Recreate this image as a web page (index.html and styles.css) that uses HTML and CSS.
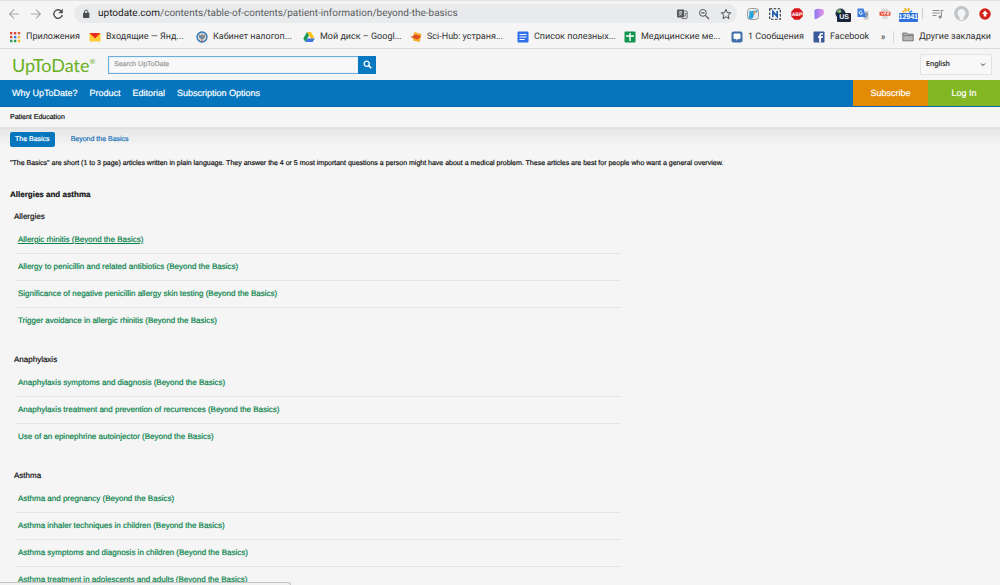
FILE: index.html
```html
<!DOCTYPE html>
<html lang="en">
<head>
<meta charset="utf-8">
<title>Patient Education - UpToDate</title>
<link rel="stylesheet" href="styles.css">
</head>
<body>
<div class="chrome">
  <div class="toolbar">
    <button class="tool" aria-label="Back"><svg width="12" height="12" viewBox="0 0 12 12" fill="none" stroke="#aaa" stroke-width="1.2"><path d="M11 6H1.8M6 1.6 1.6 6 6 10.4"/></svg></button>
    <button class="tool" aria-label="Forward"><svg width="12" height="12" viewBox="0 0 12 12" fill="none" stroke="#aaa" stroke-width="1.2"><path d="M1 6h9.2M6 1.6 10.4 6 6 10.4"/></svg></button>
    <button class="tool" aria-label="Reload"><svg width="12" height="12" viewBox="0 0 12 12"><path d="M9.7 3.6A4.3 4.3 0 1 0 10.3 7" fill="none" stroke="#4c4d50" stroke-width="1.4"/><path d="M10.8.8v4.4H6.4z" fill="#4c4d50"/></svg></button>
    <div class="omnibox">
      <svg width="8" height="10" viewBox="0 0 8 10"><rect x="1" y="3.8" width="6.4" height="5.2" rx=".7" fill="#4c4d50"/><path d="M2.5 4V2.8a1.7 1.7 0 0 1 3.4 0V4" fill="none" stroke="#4c4d50"/></svg>
      <span class="url"><b>uptodate.com</b>/contents/table-of-contents/patient-information/beyond-the-basics</span>
      <button class="tool" aria-label="Translate"><svg width="12" height="12" viewBox="0 0 12 12"><rect x="1" y="1.5" width="7" height="8" rx=".8" fill="#55565a"/><path d="M2.6 4h3.6M4.4 3v1M5.7 4C5.2 6 4 7 2.6 7.5M3.3 5c.5 1 1.3 1.7 2.4 2.3" stroke="#eee" stroke-width=".8" fill="none"/><path d="M8 3h2.4c.5 0 .8.3.8.8v6c0 .5-.3.8-.8.8H6l-.7-1.1" fill="none" stroke="#55565a" stroke-width=".8"/><path d="M8.6 5.5h2M9.6 5.5C9.5 7 9 8 8 8.8M8.6 7l1.8 1.8" stroke="#55565a" stroke-width=".7" fill="none"/></svg></button>
      <button class="tool" aria-label="Zoom"><svg width="12" height="12" viewBox="0 0 12 12" fill="none" stroke="#55565a"><circle cx="4.9" cy="4.9" r="3.4"/><path d="M3.3 4.9h3.2M7.4 7.4l3.6 3.6" stroke-width="1.2"/></svg></button>
      <button class="tool" aria-label="Bookmark this page"><svg width="12" height="12" viewBox="0 0 12 12" fill="none" stroke="#4c4d50"><path d="M6 1.4 7.3 4.6l3.5.3-2.7 2.3.9 3.4-3-1.8-3 1.8.9-3.4L1.2 4.9l3.5-.3z"/></svg></button>
    </div>
    <div class="extensions">
      <svg width="12" height="12" viewBox="0 0 12 12"><rect x=".5" y=".5" width="11" height="11" rx="3" fill="#e9edf0" stroke="#777" stroke-width=".7"/><path d="M1.500 10.500C2.500 6 3 4 1.500 3.500L11 2.200 9.800 4.500 7.500 5 6.200 9.500c-1 1.500-3.500 1.800-4.700 1z" fill="#27a4d8"/><path d="m6.500 3.200 3-.5-1 2-1.800 3z" fill="#ef9b65"/></svg>
      <svg width="12" height="12" viewBox="0 0 12 12"><rect x=".7" y=".7" width="10.6" height="10.6" fill="none" stroke="#25313b" stroke-width="1.100" stroke-dasharray="2.5 1.500"/><path d="M3.9 9V3.400L8.200 8.600V3" fill="none" stroke="#1757ad" stroke-width="1.600"/></svg>
      <svg width="12" height="12" viewBox="0 0 12 12"><path d="M3.6.3h4.8l3.3 3.3v4.8l-3.3 3.3H3.6L.3 8.4V3.6z" fill="#d9151c"/><text x="6" y="7.8" class="abp">ABP</text></svg>
      <svg width="12" height="12" viewBox="0 0 12 12"><defs><linearGradient id="pp" x1="0" x2="1"><stop stop-color="#8d75ee"/><stop offset="1" stop-color="#e996e9"/></linearGradient></defs><path d="M1.500 2 4 .8 9 1c2.500 1 2.800 4 1 6L6 9.500 2.500 11.500 1.500 10z" fill="url(#pp)"/></svg>
      <span class="badged"><svg width="12" height="12" viewBox="0 0 12 12"><circle cx="5.500" cy="5.500" r="5" fill="#243549"/><path d="M1.500 3.500c1.500-2 3-2.500 4-2l1 2-2 2z" fill="#82b575"/></svg><span class="badge dark">US</span></span>
      <svg width="12" height="12" viewBox="0 0 12 12"><path d="M5 3h6.500v8.500H7z" fill="#c5c8cc"/><path d="M.5.5h6L9 9H.5z" fill="#397de1"/><path d="M5.200 3.500a1.700 1.700 0 1 0 .3 1.700H4" fill="none" stroke="#fff" stroke-width=".9"/><path d="M8 6h3M9.500 5v1M10.500 6C10 8 9 9 8 9.500" stroke="#65707d" stroke-width=".8" fill="none"/></svg>
      <svg width="12" height="12" viewBox="0 0 12 12"><path d="M2 .8h7.500L8.500 11h-5z" fill="#dcd9d6"/><rect x=".5" y="3.700" width="11" height="4" rx=".7" fill="#e94834"/><path d="M2 4.500 3.300 6.800 4.500 4.500M5.500 6.800V4.700H7v1H5.500M8.500 7V4.600H10v1L8.500 5.800 10 7" stroke="#fff" stroke-width=".7" fill="none"/></svg>
      <span class="badged"><svg width="12" height="12" viewBox="0 0 12 12"><path d="m1.500 3 2 1.500" stroke="#f1b52d" stroke-width="2"/><path d="M4 0 5 3.500M8 0 7 3.500" stroke="#f1b52d" stroke-width="2"/><path d="m11 3-2.500 1.500" stroke="#359be5" stroke-width="2"/></svg><span class="badge blue">12941</span></span>
      <i class="divider"></i>
      <svg width="12" height="12" viewBox="0 0 12 12"><path d="M.5 2.500h7M.5 5h7M.5 7.500h4M9.300 9V2.500h2.200" fill="none" stroke="#8e8e8e" stroke-width="1.100"/><circle cx="8" cy="9" r="1.600" fill="#8e8e8e"/></svg>
      <svg width="15" height="15" viewBox="0 0 15 15"><circle cx="7.500" cy="7.500" r="7.400" fill="#c2c5c8"/><path d="M5.500 14v-3C2.500 9 3 3 7.500 3S12.500 9 9.500 11v3z" fill="#f3f4f4"/></svg>
      <svg width="12" height="12" viewBox="0 0 12 12"><circle cx="6" cy="6" r="5.700" fill="#d5211b"/><path d="M6 2.600 9 6H7.300v2.600H4.700V6H3z" fill="#fff"/></svg>
    </div>
  </div>
  <nav class="bookmarks" aria-label="Bookmarks">
    <a href="#" class="mark apps"><svg width="12" height="12" viewBox="0 0 12 12"><path d="M1 1h2.400v2.400H1zM4.900 1h2.400v2.400H4.900zM1 4.900h2.400v2.400H1z" fill="#dc4638"/><path d="M8.800 1h2.400v2.400H8.800z" fill="#e75b43"/><path d="M4.900 4.900h2.400v2.400H4.900z" fill="#3478df"/><path d="M8.800 4.900h2.400v2.400H8.800zM8.800 8.800h2.400v2.400H8.800z" fill="#f4b62a"/><path d="M1 8.800h2.400v2.400H1zM4.900 8.800h2.400v2.400H4.900z" fill="#2d9c57"/></svg>Приложения</a>
    <a href="#" class="mark"><svg width="12" height="12" viewBox="0 0 12 12"><path d="M.5 2h11v8.500H.5z" fill="#fc3"/><path d="M.5 2h11L6 7.500z" fill="#e62c20"/></svg>Входящие — Янд...</a>
    <a href="#" class="mark"><svg width="12" height="12" viewBox="0 0 12 12"><circle cx="6" cy="6" r="5" fill="#d9d5cd" stroke="#2573b3" stroke-width="1.300"/><path d="m3 3.500 2 1 1-2 1 2 2-1v3L6 9 3 6.500z" fill="#7d8a96"/><path d="M5 10h2" stroke="#c65349"/></svg>Кабинет налогоп...</a>
    <a href="#" class="mark"><svg width="12" height="12" viewBox="0 0 12 12"><path d="M4 1h4l3.700 6.500H7.800z" fill="#fbc21d"/><path d="M4 1 6 4.500 2.300 11 .3 7.500z" fill="#199b55"/><path d="M4.200 7.500h7.500l-2 3.500H2.300z" fill="#3e76df"/></svg>Мой диск – Googl...</a>
    <a href="#" class="mark"><svg width="12" height="12" viewBox="0 0 12 12"><path d="m4 1 7.500 2-1.800 8L3 9.500z" fill="#f8ae2a"/><path d="M.3 6 3 5l1.500-1.500L8 4l3 1.500L9.500 7 7 8.500 4.500 7.500z" fill="#df4f20"/></svg>Sci-Hub: устраня...</a>
    <a href="#" class="mark"><svg width="12" height="12" viewBox="0 0 12 12"><rect x=".5" y=".5" width="11" height="11" rx="1" fill="#2f70e8"/><path d="M2.500 3.500h7M2.500 6h7M2.500 8.500h5" stroke="#fff" stroke-width="1.200"/></svg>Список полезных...</a>
    <a href="#" class="mark"><svg width="12" height="12" viewBox="0 0 12 12"><rect x=".5" y=".5" width="11" height="11" rx="1" fill="#11954d"/><path d="M6 2v8M2 5h8" stroke="#fff" stroke-width="1.400"/></svg>Медицинские ме...</a>
    <a href="#" class="mark short"><svg width="12" height="12" viewBox="0 0 12 12"><rect x=".5" y=".5" width="11" height="11" rx="2" fill="#3f6fa8"/><path d="M3.500 2.500h5q1 0 1 1V7q0 1-1 1H7L5.500 9.800V8h-2q-1 0-1-1V3.500q0-1 1-1z" fill="#fff"/></svg>1 Сообщения</a>
    <a href="#" class="mark fb"><svg width="12" height="12" viewBox="0 0 12 12"><rect x=".5" y=".5" width="11" height="11" rx=".7" fill="#3b5998"/><path d="M8 11.500V7h1.800V5.300H8V4.400q0-.8.8-.8H10V2H8.300Q6.200 2 6.200 4.200v1.100H5V7h1.200v4.500z" fill="#fff"/></svg>Facebook</a>
    <button class="tool more" aria-label="More bookmarks">»</button>
    <a href="#" class="mark other"><svg width="12" height="12" viewBox="0 0 12 12"><path d="M.8 2h4l1 1.200h5.400v6.600H.8z" fill="#b5b5b5" stroke="#666" stroke-width=".8"/><path d="M1 4.600h10" stroke="#666" stroke-width=".7"/></svg>Другие закладки</a>
  </nav>
</div>

<header class="site-header">
  <a href="#" class="logo">UpToDate<sup>®</sup></a>
  <form class="search">
    <input type="search" aria-label="Search UpToDate" placeholder="Search UpToDate">
    <button type="button" aria-label="Search"><svg width="9" height="9" viewBox="0 0 9 9" fill="none" stroke="#fff"><circle cx="3.700" cy="3.700" r="2.600" stroke-width="1.300"/><path d="m5.600 5.600 2.700 2.700" stroke-width="1.600"/></svg></button>
  </form>
  <select class="language" aria-label="Language"><option>English</option></select>
</header>

<nav class="main-nav" aria-label="Main">
  <a href="#">Why UpToDate?</a><a href="#">Product</a><a href="#">Editorial</a><a href="#">Subscription Options</a>
  <div class="account"><a href="#" class="subscribe">Subscribe</a><a href="#" class="login">Log In</a></div>
</nav>

<div class="crumb">Patient Education</div>

<main class="content">
  <div class="tabs"><a href="#" class="tab active">The Basics</a><a href="#" class="tab">Beyond the Basics</a></div>
  <p class="intro">"The Basics" are short (1 to 3 page) articles written in plain language. They answer the 4 or 5 most important questions a person might have about a medical problem. These articles are best for people who want a general overview.</p>
  <h1>Allergies and asthma</h1>
  <section class="topic">
    <h2>Allergies</h2>
    <ul>
      <li><a href="#" class="current">Allergic rhinitis (Beyond the Basics)</a></li>
      <li><a href="#">Allergy to penicillin and related antibiotics (Beyond the Basics)</a></li>
      <li><a href="#">Significance of negative penicillin allergy skin testing (Beyond the Basics)</a></li>
      <li><a href="#">Trigger avoidance in allergic rhinitis (Beyond the Basics)</a></li>
    </ul>
  </section>
  <section class="topic">
    <h2>Anaphylaxis</h2>
    <ul>
      <li><a href="#">Anaphylaxis symptoms and diagnosis (Beyond the Basics)</a></li>
      <li><a href="#">Anaphylaxis treatment and prevention of recurrences (Beyond the Basics)</a></li>
      <li><a href="#">Use of an epinephrine autoinjector (Beyond the Basics)</a></li>
    </ul>
  </section>
  <section class="topic">
    <h2>Asthma</h2>
    <ul>
      <li><a href="#">Asthma and pregnancy (Beyond the Basics)</a></li>
      <li><a href="#">Asthma inhaler techniques in children (Beyond the Basics)</a></li>
      <li><a href="#">Asthma symptoms and diagnosis in children (Beyond the Basics)</a></li>
      <li><a href="#">Asthma treatment in adolescents and adults (Beyond the Basics)</a></li>
    </ul>
  </section>
</main>
<div class="status-bar"></div>
</body>
</html>
```
FILE: styles.css
```css
* { box-sizing: border-box; }
html { overflow: hidden; text-rendering: geometricPrecision; }
body { margin: 0; height: 100vh; overflow: hidden; background: #f5f5f5; color: #111; font-family: "Liberation Sans", Arial, sans-serif; font-size: 8px; -webkit-text-stroke: 0.2px; }
a { color: inherit; text-decoration: none; }
button { padding: 0; border: 0; background: none; font: inherit; color: inherit; }
button, input, select { text-rendering: inherit; }
svg { display: block; flex: none; }

.chrome { border-top: 1px solid #dfe1e5; border-bottom: 1px solid #dadada; font-family: Roboto, sans-serif; font-size: 9px; color: #333; -webkit-text-stroke: 0; }
.toolbar { display: flex; align-items: center; height: 25px; padding: 0 9px 0 8px; gap: 10px; }
.omnibox { display: flex; flex: 1; align-items: center; height: 19px; padding: 0 5px 0 8px; gap: 10px; border-radius: 10px; background: #e8eaec; }
.url { flex: 1; margin-left: -2px; font-size: 10px; color: #5b5d60; white-space: nowrap; }
.url b { font-weight: 400; color: #222; }
.extensions { display: flex; align-items: center; gap: 10px; }
.abp { font: bold 5px "Liberation Sans", sans-serif; fill: #fff; text-anchor: middle; }
.badged { position: relative; width: 12px; }
.badge { position: absolute; top: 5px; padding: 0 2px; border-radius: 1px; font: bold 7px/9px "Liberation Sans", sans-serif; color: #fff; }
.badge.dark { right: -4px; background: #17253b; }
.badge.blue { right: -5px; padding: 0; background: #2d72df; }
.divider { width: 1px; height: 11px; margin: 0 -1px; background: #ccc; }

.bookmarks { display: flex; align-items: center; height: 22px; padding: 0 9px; white-space: nowrap; }
.mark { display: flex; flex: none; align-items: center; gap: 5px; width: 107px; }
.mark.apps { width: 80px; }
.mark.short { width: 82px; }
.mark.fb { width: 60px; }
.more { margin: 0 auto; font-size: 10px; }
.mark.other { width: auto; padding-left: 8px; border-left: 1px solid #d6d6d6; }

.site-header { display: flex; align-items: center; height: 31px; padding: 0 8px 0 12px; }
.logo { width: 96px; font-family: Lato, sans-serif; font-size: 18px; line-height: 28px; color: #68b022; -webkit-text-stroke: 0; }
.logo sup { font-size: 7px; line-height: 7px; vertical-align: 8px; }
.search { display: flex; width: 268px; height: 18px; }
.search input { flex: 1; min-width: 0; padding: 0 5px; border: 1px solid #6aaedb; border-right: 0; border-radius: 0; outline: 0; background: #f8f8f8; font: 7px "Liberation Sans", sans-serif; box-shadow: inset 0 0 1px #6aaedb; }
.search input::placeholder { color: #999; }
.search button { display: grid; place-items: center; width: 18px; background: #0878c0; }
.language { appearance: none; width: 72px; height: 21px; margin-left: auto; padding: 0 5px; border: 1px solid #e2e2e2; border-radius: 0; background: #f8f8f8 url("data:image/svg+xml,%3Csvg xmlns='http://www.w3.org/2000/svg' width='6' height='4'%3E%3Cpath d='m1 .5 2 2 2-2' fill='none' stroke='%23333'/%3E%3C/svg%3E") no-repeat right 5px center; font: 7px "Noto Sans", sans-serif; color: #222; }

.main-nav { display: flex; align-items: center; height: 27px; padding-left: 12px; gap: 12px; border-bottom: 1px solid #0869ad; background: #0576be; color: #fff; font-size: 9px; line-height: 26px; }
.account { display: flex; margin-left: auto; text-align: center; }
.subscribe { width: 75px; background: #e38b05; }
.login { width: 72px; background: #82b622; }

.crumb { height: 22px; padding-left: 10px; border-bottom: 2px solid #e2e2e2; font-size: 7px; line-height: 21px; }
.content { padding: 3px 10px; background: linear-gradient(#e7e7e7, #f5f5f5 18px); }
.tabs { display: flex; gap: 11px; font-size: 7px; line-height: 15px; }
.tab { padding: 0 5px; border-radius: 2px; color: #1773b8; }
.tab.active { background: #0576be; color: #fff; }
.intro { margin: 12px 0 0; font-size: 7px; line-height: 10px; }
h1 { margin: 20px 0 5px; font-size: 8px; line-height: 12px; }
.topic { margin-bottom: 15px; padding-left: 4px; }
h2 { margin: 0; font-size: 8px; font-weight: 400; line-height: 21px; }
ul { width: 62%; margin: 0 0 0 2px; padding: 0; list-style: none; }
li { padding-left: 2px; border-bottom: 1px solid #e4e4e4; line-height: 26px; color: #0b844c; }
li:last-child { border-bottom: 0; }
.current { text-decoration: underline; }
.status-bar { position: fixed; left: 0; bottom: 0; width: 291px; height: 3px; border: 1px solid #c4c4c4; border-width: 1px 1px 0 0; border-radius: 0 3px 0 0; background: #f2f2f2; }
```
